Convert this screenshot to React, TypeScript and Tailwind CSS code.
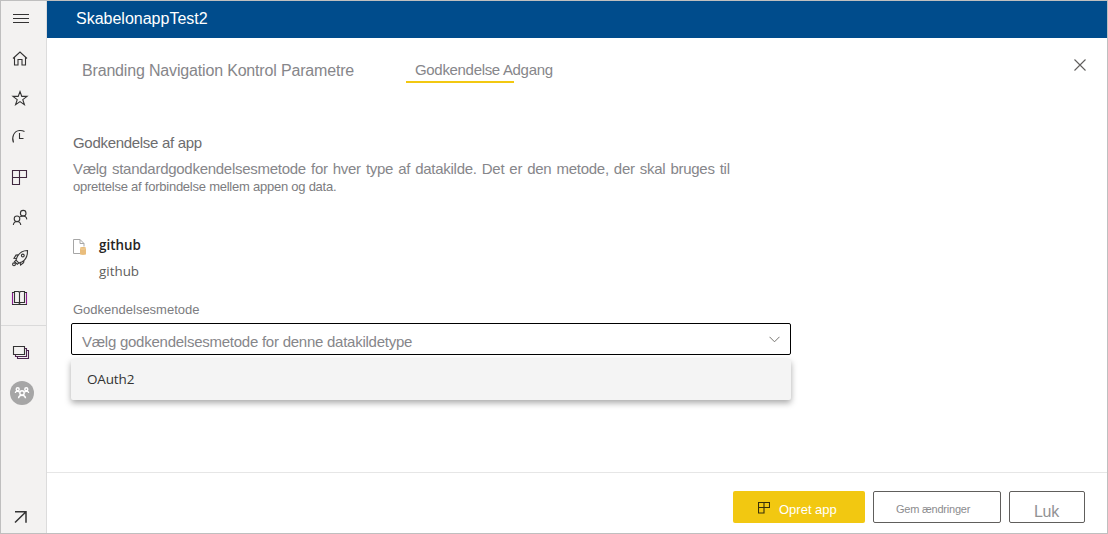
import React from "react";

type IconProps = { top: number; height: number; children: React.ReactNode };

/* Each rail icon is drawn in the rail's own coordinates. */
function RailIcon({ top, height, children }: IconProps) {
  return (
    <button className="block shrink-0">
      <svg
        width="45"
        height={height}
        viewBox={`1 ${top} 45 ${height}`}
        fill="none"
        stroke="#333"
        strokeWidth="1.1"
        className="block"
      >
        {children}
      </svg>
    </button>
  );
}

function Rail() {
  return (
    <nav className="flex w-[46px] shrink-0 flex-col border-r border-[#dcdcdc] bg-[#f3f2f1]">
      <RailIcon top={1} height={37}>
        <path d="M13 14.5h16M13 18.5h16M13 22.5h16" />
      </RailIcon>
      <RailIcon top={38} height={40}>
        <path d="M13 58.5 20 52l7 6.500M14.500 57.500v7.500h3.500v-5.500h4v5.500h3.500v-7.500" />
      </RailIcon>
      <RailIcon top={78} height={40}>
        <path d="m20 91.500 1.800 4.900h5.200l-4.200 3.200 1.600 5.100-4.400-3.100-4.400 3.100 1.600-5.100-4.200-3.200h5.200z" />
      </RailIcon>
      <RailIcon top={118} height={40}>
        <path d="M13.500 142.500c-2.200-5.500.5-11.500 6-12 2-.2 3.500.2 5 1M19.500 133v5.500h4" />
      </RailIcon>
      <RailIcon top={158} height={40}>
        <path d="M12.500 170.500h14v7h-14zM12.500 170.500v14h7v-14" stroke="#40283f" />
      </RailIcon>
      <RailIcon top={198} height={40}>
        <circle cx="23.200" cy="213.200" r="2.800" />
        <circle cx="17" cy="218.800" r="2.800" />
        <path d="M13.300 225c.3-2.200 1.700-3.500 3.700-3.500s3.500 1.300 3.800 3.500M20.200 216.800c.8-.6 1.800-.8 3-.8 2 0 3.300 1.300 3.600 3.300" />
      </RailIcon>
      <RailIcon top={238} height={40}>
        <path d="M27.500 250.500c-4.500.1-8 2-10.300 6.300l-1.200 3.300 3 3 3.200-1.400c3.700-2 5.400-6.200 5.300-11.200zM18.300 254.800l-2.300.3-2 3.200 2.600.2M24 260.500l-.4 2.200-3 2.300-.5-2.500M16 260.200l-1.500 1.500 2.800 2.500 1.600-1.300" />
        <circle cx="22.800" cy="255.500" r="1.400" />
        <circle cx="14" cy="264.300" r="1.400" />
      </RailIcon>
      <RailIcon top={278} height={40}>
        <path d="M12.500 292v12.500M26.500 292v12.500" stroke="#8a1f8f" />
        <path d="M14.500 302.500v-11h4l1 1 1-1h4v11h-4l-1 1-1-1zM19.500 292v12M12 304.500h15M12 292.500h2.500M24.500 292.500h2.500" />
      </RailIcon>
      <div className="h-[7px] shrink-0" />
      <div className="h-px shrink-0 bg-[#dadada]" />
      <div className="h-[6px] shrink-0" />
      <RailIcon top={332} height={40}>
        <path d="M13.500 346.500h11v8h-11z" />
        <path d="M24.500 348.500h2v8h-11v-2M26.500 350.500h2v8h-11v-2" stroke="#4c234f" />
      </RailIcon>
      <RailIcon top={372} height={42}>
        <circle cx="22" cy="393" r="12" fill="#a6a6a6" stroke="none" />
        <g stroke="#fff" strokeWidth="1.400">
          <circle cx="17.700" cy="389.300" r="1.500" />
          <circle cx="26.300" cy="389.300" r="1.500" />
          <circle cx="22" cy="393" r="2.200" />
          <path d="M15.300 393c.2-1.200 1-1.900 2.300-1.900l2 .9M28.700 393c-.2-1.200-1-1.900-2.300-1.900l-2 .9M18.500 398.300c.2-1.900 1.400-3 3.500-3s3.300 1.100 3.500 3" />
        </g>
      </RailIcon>
      <div className="grow" />
      <RailIcon top={497} height={36}>
        <path d="M15 511.800h11v11M26 511.800 15 522.500" strokeWidth="1.500" />
      </RailIcon>
    </nav>
  );
}

function AppGlyph() {
  return (
    <svg width="12" height="12" viewBox="0 0 12 12" fill="none" stroke="#38300a" strokeWidth="1.100" className="mt-[2px] block">
      <path d="M.5 .5h11v5H.5zM.5 .5v10.500h5.500V.5" />
    </svg>
  );
}

export default function App() {
  return (
    <div className="flex h-[534px] w-[1108px] overflow-hidden border border-[#bfbfbf] bg-white font-['Liberation_Sans',sans-serif] whitespace-nowrap text-[#86868a]">
      <Rail />
      <div className="flex min-w-0 grow flex-col">
        <header className="h-[37px] shrink-0 bg-[#004c8c] pl-[29px] text-[16px] leading-[35px] text-white">
          SkabelonappTest2
        </header>

        <div className="flex h-[46px] shrink-0 items-start">
          <div className="w-[324px] pt-[23px] pl-[35px] text-[16px] leading-5 tracking-[-0.17px]">
            Branding Navigation Kontrol Parametre
          </div>
          <div className="ml-[35px] flex flex-col pt-[22px]">
            <div className="h-[21px] pl-[9px] text-[15px] leading-5 tracking-[-0.32px]">
              Godkendelse Adgang
            </div>
            <div className="h-[2px] w-[108px] bg-[#f2c811]" />
          </div>
          <button className="mt-[21px] mr-[21px] ml-auto">
            <svg width="12" height="12" viewBox="0 0 12 12" stroke="#605e5c" strokeWidth="1.100" className="block">
              <path d="m.5 .5 11 11M11.500 .5l-11 11" />
            </svg>
          </button>
        </div>

        <main className="flex w-[744px] grow flex-col items-start pt-[49px] pl-[24px]">
          <h1 className="pl-[2px] text-[15px] leading-5 tracking-[-0.3px] text-[#6c6c6e]">
            Godkendelse af app
          </h1>
          <p className="mt-[6px] pl-[2px] text-[15px] leading-5 tracking-[-0.27px] [word-spacing:1.150px]">
            Vælg standardgodkendelsesmetode for hver type af datakilde. Det er den metode, der skal bruges til
          </p>
          <p className="pl-[2px] text-[13px] leading-4 tracking-[-0.24px] text-[#7c7c80]">
            oprettelse af forbindelse mellem appen og data.
          </p>

          <div className="mt-[40px] flex items-start pl-[2px] font-['Open_Sans',sans-serif] text-[13.400px] leading-5">
            <svg width="14" height="16" viewBox="0 0 14 16" fill="none" className="mt-[4px] block">
              <path d="M7 14.500H.5V.5h6.500l4 4v3M7 .5v4h4" stroke="#a6a6a6" />
              <path d="M7 9c0-1.300 6-1.300 6 0v6c0 1.200-6 1.200-6 0z" fill="#e9bd7c" />
              <path d="M7 9.500c1 .8 5 .8 6 0" stroke="#f6dfb9" strokeWidth=".6" />
            </svg>
            <div className="ml-[12px]">
              <div className="font-semibold text-[#252423]">github</div>
              <div className="mt-[6px] text-[#605e5c]">github</div>
            </div>
          </div>

          <label className="mt-[19px] pl-[2px] text-[13px] leading-5 text-[#7c7c80]">Godkendelsesmetode</label>
          <div className="relative mt-[3px]">
            <button className="flex h-[32px] w-[720px] items-center rounded-[2px] border border-black pr-[10px] pl-[10px] text-left">
              <span className="grow pt-[5px] text-[15px] leading-5 tracking-[-0.25px]">
                Vælg godkendelsesmetode for denne datakildetype
              </span>
              <svg width="11" height="7" viewBox="0 0 11 7" fill="none" stroke="#76746f" className="block">
                <path d="m.5 .8 5 5 5-5" />
              </svg>
            </button>
            <ul className="absolute top-[36px] left-0 w-[720px] rounded-[2px] bg-[#f4f4f4] shadow-[0_3px_6px_rgba(0,0,0,0.34)]">
              <li className="h-[41px] pl-[16px] font-['Open_Sans',sans-serif] text-[13.500px] leading-[40px] tracking-[-0.15px] text-[#333]">
                OAuth2
              </li>
            </ul>
          </div>
        </main>

        <footer className="flex h-[61px] shrink-0 items-start justify-end gap-[8px] border-t border-[#e6e6e6] pt-[18px] pr-[22px]">
          <button className="flex h-[32px] w-[132px] items-center rounded-[2px] bg-[#f2c811] pl-[25px] text-white">
            <AppGlyph />
            <span className="ml-[9px] pt-[5px] text-[13px] leading-5">Opret app</span>
          </button>
          <button className="h-[32px] w-[128px] rounded-[2px] border border-[#605e5c] pl-[22px] text-left text-[11px] leading-[29px] tracking-[-0.22px] text-[#8c8c8e]">
            <span className="block pt-[3px]">Gem ændringer</span>
          </button>
          <button className="h-[32px] w-[76px] rounded-[2px] border border-[#605e5c] pt-[8px] pl-[24px] text-left text-[16px] leading-[24px] tracking-[-0.3px] text-[#929294]">
            Luk
          </button>
        </footer>
      </div>
    </div>
  );
}
